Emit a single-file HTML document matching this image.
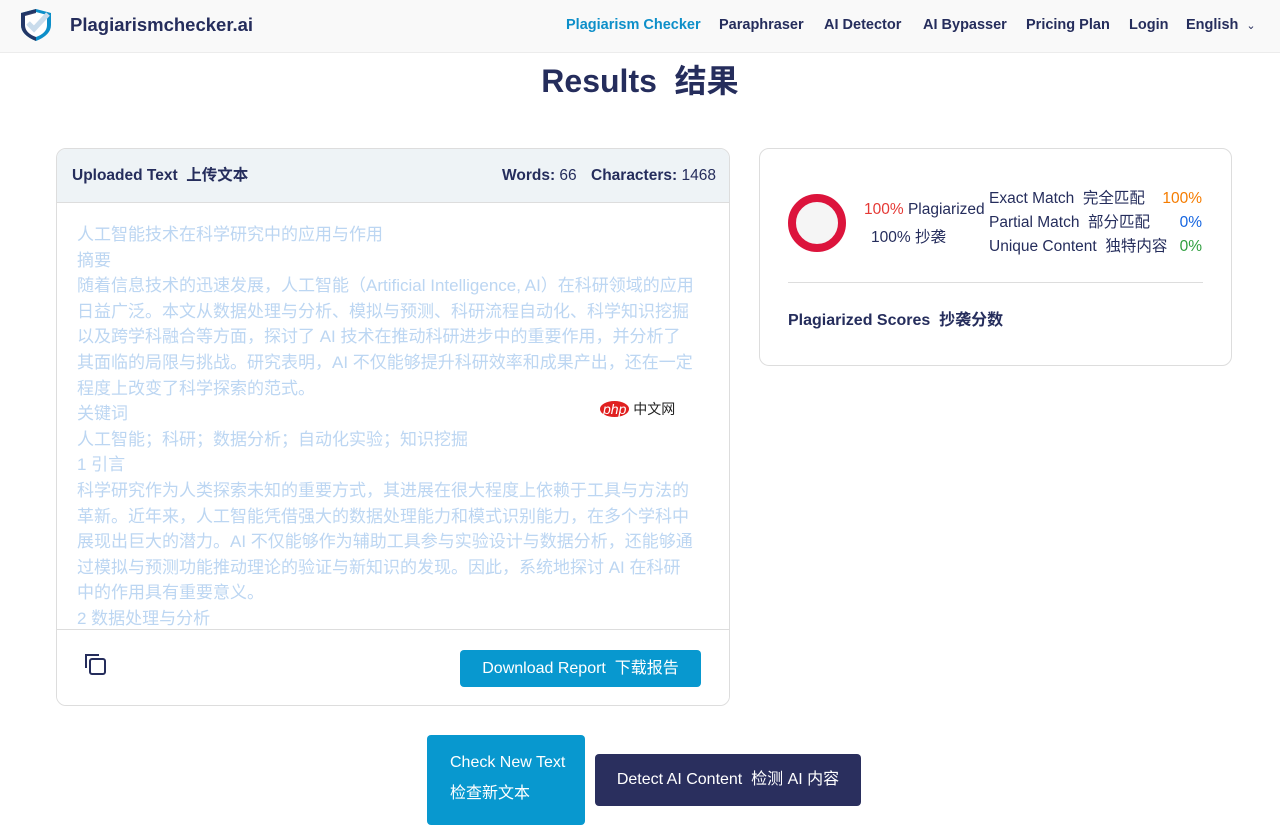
<!DOCTYPE html>
<html><head><meta charset="utf-8"><style>
*{box-sizing:border-box;margin:0;padding:0}
body{width:1280px;height:816px;overflow:hidden;background:#fff;font-family:"Liberation Sans","Noto Sans CJK SC",sans-serif;color:#252d5c;position:relative}
.nav{position:absolute;left:0;top:0;width:1280px;height:53px;background:#f9f9f9;border-bottom:1px solid #ececec}
.logo{position:absolute;left:70px;top:14px;font-size:18.5px;font-weight:bold;color:#252d5c}
.links{position:absolute;top:17px;font-size:14.5px;font-weight:bold;color:#252d5c}
.links span{position:absolute;white-space:nowrap}
h1{position:absolute;top:56px;left:0;width:1280px;text-align:center;font-size:32px;font-weight:bold;color:#252d5c}
.card{position:absolute;left:56px;top:148px;width:674px;height:558px;border:1px solid #ddd;border-radius:10px;overflow:hidden}
.ch{height:54px;background:#eef3f6;border-bottom:1px solid #ddd;position:relative;font-size:15.5px}
.ch span{position:absolute;top:0;line-height:53px;white-space:nowrap}
.body{position:absolute;left:20px;top:73px;width:618px;font-size:17px;line-height:25.6px;color:#bcd6f2}
.foot{position:absolute;left:0;top:480px;width:674px;border-top:1px solid #ddd;height:80px;background:#fff}
.btn{position:absolute;background:#0898cf;color:#fff;font-size:16px;border-radius:4px}
.rc{position:absolute;left:759px;top:148px;width:473px;height:218px;border:1px solid #ddd;border-radius:10px}
</style></head><body>
<div class="nav">
<svg style="position:absolute;left:18px;top:7px" width="36" height="36" viewBox="0 0 36 36"><path d="M3 6 L18 2 L33 6 L33 18 Q33 28 18 34 Q3 28 3 18Z" fill="#0d8fc9"/><path d="M7 8 L18 5 L29 8 L29 18 Q29 26 18 30 Q7 26 7 18Z" fill="#fff"/><path d="M3 6 L18 2 L18 34 Q3 28 3 18Z" fill="#252d5c" opacity=".9"/><path d="M7 9 L18 6 L18 30 Q7 26 7 18Z" fill="#fff"/><path d="M10 16 L16 22 L30 7" stroke="#c9dcec" stroke-width="5" fill="none"/></svg>
<div class="logo">Plagiarismchecker.ai</div>
<div class="links">
<span style="left:566px;color:#0d8fc9">Plagiarism Checker</span>
<span style="left:719px">Paraphraser</span>
<span style="left:824px">AI Detector</span>
<span style="left:923px">AI Bypasser</span>
<span style="left:1026px">Pricing Plan</span>
<span style="left:1129px">Login</span>
<span style="left:1186px">English &nbsp;<span style="position:static;font-weight:normal;font-size:11px">⌄</span></span>
</div></div>
<h1>Results &nbsp;结果</h1>
<div class="card">
<div class="ch"><span style="left:15px;font-weight:bold">Uploaded Text &nbsp;上传文本</span><span style="left:445px"><b>Words:</b> 66</span><span style="left:534px"><b>Characters:</b> 1468</span></div>
<div class="body">人工智能技术在科学研究中的应用与作用<br>摘要<br>随着信息技术的迅速发展，人工智能（Artificial Intelligence, AI）在科研领域的应用日益广泛。本文从数据处理与分析、模拟与预测、科研流程自动化、科学知识挖掘以及跨学科融合等方面，探讨了 AI 技术在推动科研进步中的重要作用，并分析了其面临的局限与挑战。研究表明，AI 不仅能够提升科研效率和成果产出，还在一定程度上改变了科学探索的范式。<br>关键词<br>人工智能；科研；数据分析；自动化实验；知识挖掘<br>1 引言<br>科学研究作为人类探索未知的重要方式，其进展在很大程度上依赖于工具与方法的革新。近年来，人工智能凭借强大的数据处理能力和模式识别能力，在多个学科中展现出巨大的潜力。AI 不仅能够作为辅助工具参与实验设计与数据分析，还能够通过模拟与预测功能推动理论的验证与新知识的发现。因此，系统地探讨 AI 在科研中的作用具有重要意义。<br>2 数据处理与分析</div>
<div style="position:absolute;left:543px;top:250px;font-size:14px;color:#222"><span style="background:#e02020;color:#fff;border-radius:50%;padding:0 3px;font-style:italic">php</span> 中文网</div>
<div class="foot">
<svg style="position:absolute;left:28px;top:24px" width="22" height="22" viewBox="0 0 22 22" fill="none" stroke="#252d5c" stroke-width="2"><path d="M1 14V1h13"/><rect x="5" y="5" width="15" height="15" rx="2"/></svg>
<div class="btn" style="left:403px;top:20px;width:241px;height:37px;line-height:37px;text-align:center">Download Report &nbsp;下载报告</div>
</div></div>
<div class="rc">
<div style="position:absolute;left:28px;top:45px;width:58px;height:58px;border:8px solid #dc143c;border-radius:50%;background:#f5f5f5"></div>
<div style="position:absolute;left:104px;top:52px;font-size:15.5px"><span style="color:#e53935">100%</span> Plagiarized</div>
<div style="position:absolute;left:111px;top:76px;font-size:15.5px">100% 抄袭</div>
<div style="position:absolute;left:229px;top:38px;font-size:15.5px;line-height:24px">Exact Match &nbsp;完全匹配<br>Partial Match &nbsp;部分匹配<br>Unique Content &nbsp;独特内容</div>
<div style="position:absolute;right:29px;top:38px;font-size:15.5px;line-height:24px;text-align:right"><span style="color:#f57c00">100%</span><br><span style="color:#1565e0">0%</span><br><span style="color:#2e9e3e">0%</span></div>
<div style="position:absolute;left:28px;top:133px;width:415px;border-top:1px solid #ddd"></div>
<div style="position:absolute;left:28px;top:157px;font-size:16px;font-weight:bold">Plagiarized Scores &nbsp;抄袭分数</div>
</div>
<div class="btn" style="left:427px;top:735px;width:158px;height:90px;border-radius:4px;padding:12px 0 0 23px;line-height:31px">Check New Text<br>检查新文本</div>
<div class="btn" style="left:595px;top:754px;width:266px;height:52px;line-height:52px;text-align:center;background:#2a2f5e">Detect AI Content &nbsp;检测 AI 内容</div>
</body></html>
